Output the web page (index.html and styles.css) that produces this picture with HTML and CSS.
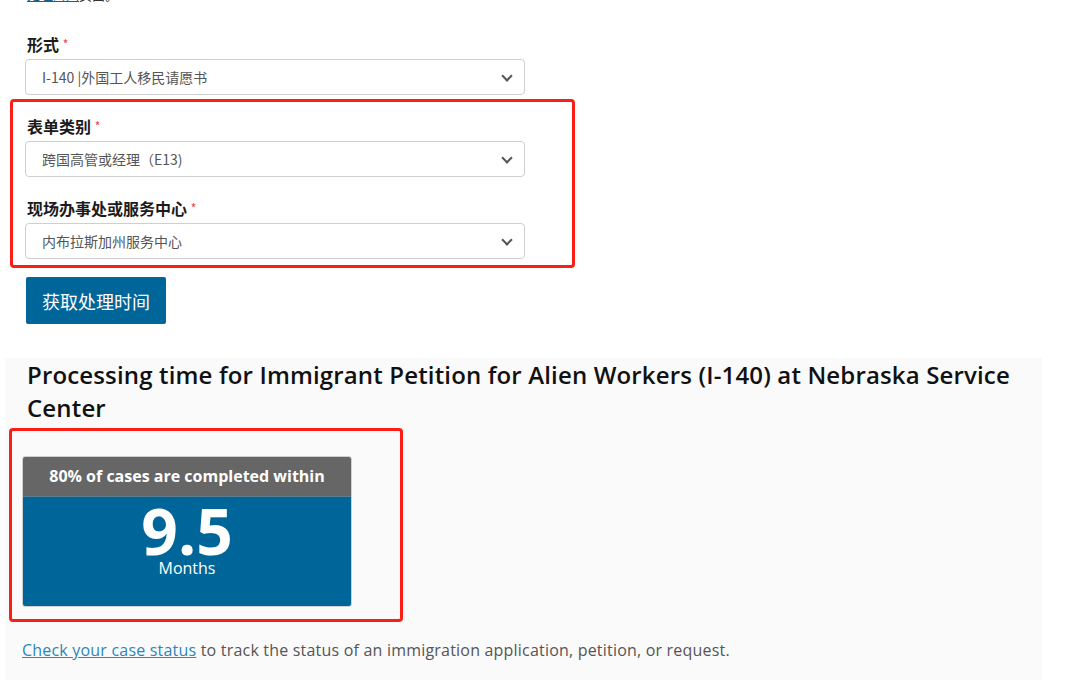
FILE: index.html
```html
<!DOCTYPE html>
<html lang="zh-CN">
<head>
    <meta charset="UTF-8">
    <meta name="viewport" content="width=device-width, initial-scale=1.0">
    <title>处理时间</title>
    <link rel="stylesheet" href="styles.css">
</head>
<body>
    <div class="form-area">
        <p class="intro"><a href="#">处理时间</a>页面。</p>

        <div class="form-group">
            <label for="formSelect">形式 <span class="req">*</span></label>
            <div class="select-wrap">
                <select id="formSelect">
                    <option>I-140 |外国工人移民请愿书</option>
                </select>
            </div>
        </div>

        <div class="highlight highlight-form">
            <div class="form-group">
                <label for="categorySelect">表单类别 <span class="req">*</span></label>
                <div class="select-wrap">
                    <select id="categorySelect">
                        <option>跨国高管或经理（E13)</option>
                    </select>
                </div>
            </div>
            <div class="form-group">
                <label for="officeSelect">现场办事处或服务中心 <span class="req">*</span></label>
                <div class="select-wrap">
                    <select id="officeSelect">
                        <option>内布拉斯加州服务中心</option>
                    </select>
                </div>
            </div>
        </div>

        <button type="button" class="btn-primary">获取处理时间</button>
    </div>

    <section class="result-panel">
        <h2>Processing time for Immigrant Petition for Alien Workers (I-140) at Nebraska Service Center</h2>

        <div class="highlight highlight-card">
            <div class="time-card">
                <div class="time-card-head">80% of cases are completed within</div>
                <div class="time-card-body">
                    <div class="time-value">9.5</div>
                    <div class="time-unit">Months</div>
                </div>
            </div>
        </div>

        <p class="case-note"><a href="#">Check your case status</a> to track the status of an immigration application, petition, or request.</p>
    </section>
</body>
</html>
```

FILE: styles.css
```css
body {
    margin: 0;
    font-family: "Open Sans", "Noto Sans CJK SC", sans-serif;
    color: #1b1b1b;
    background-color: white;
    overflow: hidden;
}
.form-area {
    padding-left: 25px;
}
.intro {
    margin: -17px 0 0 2px;
    font-family: "Noto Sans CJK SC", sans-serif;
    font-size: 13px;
    line-height: 24px;
    color: #333;
}
.intro a {
    color: #1a5f8f;
}
.form-group {
    width: 500px;
    margin-top: 26px;
}
.form-group label {
    display: block;
    margin: 0 0 4px 2px;
    font-family: "Noto Sans CJK SC", sans-serif;
    font-size: 16px;
    font-weight: 700;
    line-height: 22px;
    color: #1b1b1b;
}
.req {
    color: #e0463a;
    font-size: 12px;
    font-weight: 400;
    vertical-align: top;
}
.select-wrap {
    position: relative;
}
.select-wrap::after {
    content: "";
    position: absolute;
    right: 14px;
    top: 13px;
    width: 6px;
    height: 6px;
    border-right: 2px solid #555;
    border-bottom: 2px solid #555;
    transform: rotate(45deg);
    pointer-events: none;
}
select {
    appearance: none;
    width: 100%;
    height: 36px;
    padding: 0 40px 0 16px;
    border: 1px solid #cfcfcf;
    border-radius: 4px;
    background-color: white;
    font-family: "Noto Sans CJK SC", sans-serif;
    font-size: 14px;
    color: #555;
}
.highlight {
    border: 3px solid #fb1e14;
    border-radius: 4px;
}
.highlight-form {
    width: 547px;
    margin: 4px 0 0 -15px;
    padding: 13px 0 6px 12px;
}
.highlight-form .form-group:first-child {
    margin-top: 0;
}
.highlight-form .form-group + .form-group {
    margin-top: 20px;
}
.btn-primary {
    margin: 9px 0 0 1px;
    height: 47px;
    padding: 0 16px;
    border: none;
    border-radius: 2px;
    background-color: #00669a;
    color: white;
    font-family: "Noto Sans CJK SC", sans-serif;
    font-size: 18px;
    cursor: pointer;
}
.result-panel {
    width: 1037px;
    height: 330px;
    margin: 34px 0 0 5px;
    background-color: #fafafa;
}
.result-panel h2 {
    margin: 0;
    padding: 0 20px 0 22px;
    font-size: 24px;
    font-weight: 600;
    line-height: 33px;
    letter-spacing: 0.15px;
    color: #111;
}
.highlight-card {
    width: 330px;
    margin: 4px 0 0 4px;
    padding: 25px 48px 12px 10px;
}
.time-card {
    border: 1px solid #d0d0d0;
    border-radius: 3px;
    overflow: hidden;
    color: white;
    text-align: center;
}
.time-card-head {
    height: 39px;
    line-height: 39px;
    background-color: #666;
    font-size: 16px;
    font-weight: 700;
}
.time-card-body {
    height: 109px;
    background-color: #00669a;
    border-top: 1px solid #5a7d93;
}
.time-value {
    padding-top: 5px;
    font-size: 64px;
    font-weight: 700;
    line-height: 58px;
}
.time-unit {
    font-size: 16px;
    line-height: 16px;
}
.case-note {
    margin: 16px 0 0 17px;
    font-size: 16px;
    line-height: 24px;
    letter-spacing: 0.2px;
    color: #555;
}
.case-note a {
    color: #2b86ba;
}
```
